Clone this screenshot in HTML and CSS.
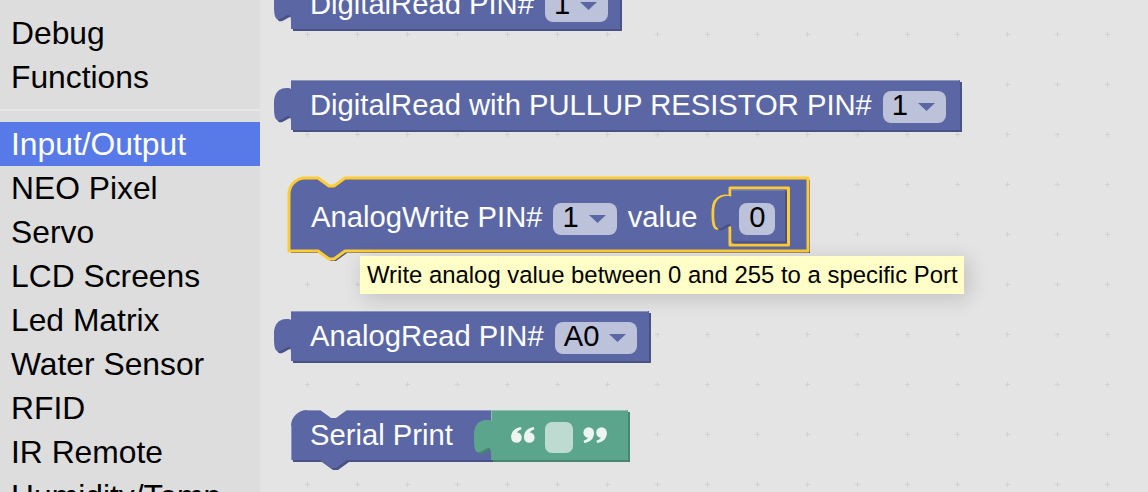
FILE: index.html
```html
<!DOCTYPE html>
<html>
<head>
<meta charset="utf-8">
<link rel="stylesheet" href="styles.css">
</head>
<body>
<div class="app">
  <nav class="toolbox">
    <ul class="cats">
      <li class="cat">Variables</li>
      <li class="cat">Debug</li>
      <li class="cat">Functions</li>
      <li class="sep"></li>
      <li class="cat sel">Input/Output</li>
      <li class="cat">NEO Pixel</li>
      <li class="cat">Servo</li>
      <li class="cat">LCD Screens</li>
      <li class="cat">Led Matrix</li>
      <li class="cat">Water Sensor</li>
      <li class="cat">RFID</li>
      <li class="cat">IR Remote</li>
      <li class="cat">Humidity/Temp</li>
    </ul>
  </nav>
  <main class="ws">
    <svg class="grid" width="888" height="492">
      <defs>
        <pattern id="gp" width="50" height="50" patternUnits="userSpaceOnUse" x="22" y="9">
          <path d="M23 25.5h5M25.5 23v5" stroke="#d2d2d2" stroke-width="1" fill="none"/>
        </pattern>
      </defs>
      <rect width="100%" height="100%" fill="url(#gp)"/>
    </svg>

    <div class="blk out b1">
      <svg class="shape" width="329" height="50">
        <path class="dk" transform="translate(2 2)" d="M0,0H329V50H0V42c0,-18.7 -17,15 -17,-14v-5c0,-18.7 17,-15 17,-14Z"/>
        <path class="fl" d="M0,0H329V50H0V42c0,-18.7 -17,15 -17,-14v-5c0,-18.7 17,-15 17,-14Z"/>
        <path class="lt" d="M0,0.5H328"/>
      </svg>
      <span class="lbl">DigitalRead PIN#</span>
      <span class="dd"><span>1</span><svg class="arr" viewBox="0 0 17 8"><path d="M0,0H17L8.5,8Z"/></svg></span>
    </div>

    <div class="blk out b2">
      <svg class="shape" width="669" height="50">
        <path class="dk" transform="translate(2 2)" d="M0,0H669V50H0V42c0,-18.7 -17,15 -17,-14v-5c0,-18.7 17,-15 17,-14Z"/>
        <path class="fl" d="M0,0H669V50H0V42c0,-18.7 -17,15 -17,-14v-5c0,-18.7 17,-15 17,-14Z"/>
        <path class="lt" d="M0,0.5H668"/>
      </svg>
      <span class="lbl">DigitalRead with PULLUP RESISTOR PIN#</span>
      <span class="dd"><span>1</span><svg class="arr" viewBox="0 0 17 8"><path d="M0,0H17L8.5,8Z"/></svg></span>
    </div>

    <div class="blk b3">
      <svg class="shape" width="519" height="73">
        <path class="dk" transform="translate(2 2)" d="M0,16A16,16 0 0 1 16,0H29l11,8 5,0 11,-8H519V73H56l-11,8 -5,0 -11,-8H0Z"/>
        <path class="fl" d="M0,16A16,16 0 0 1 16,0H29l11,8 5,0 11,-8H519V73H56l-11,8 -5,0 -11,-8H0Z"/>
        <path class="ys" d="M0,16A16,16 0 0 1 16,0H29l11,8 5,0 11,-8H519V73H56l-11,8 -5,0 -11,-8H0Z"/>
      </svg>
      <span class="lbl">AnalogWrite PIN#</span>
      <span class="dd"><span>1</span><svg class="arr" viewBox="0 0 17 8"><path d="M0,0H17L8.5,8Z"/></svg></span>
      <span class="lbl val">value</span>
      <span class="slot">
        <svg class="shape" width="80" height="57">
          <path class="fl ys" d="M20,0H78.5V57H20V42c0,-18.7 -17,15 -17,-14v-5c0,-18.7 17,-15 17,-14Z"/>
          <g transform="translate(21.5 1.5)">
            <path class="dk" transform="translate(2 2)" d="M0,0H53.5V52H0V40.5c0,-18.7 -17,15 -17,-14v-5c0,-18.7 17,-15 17,-14Z"/>
            <path class="fl" d="M0,0H53.5V52H0V40.5c0,-18.7 -17,15 -17,-14v-5c0,-18.7 17,-15 17,-14Z"/>
            <path class="lt" d="M0,0.5H53"/>
          </g>
        </svg>
        <span class="num">0</span>
      </span>
    </div>

    <div class="blk out b4">
      <svg class="shape" width="358" height="50">
        <path class="dk" transform="translate(2 2)" d="M0,0H358V50H0V42c0,-18.7 -17,15 -17,-14v-5c0,-18.7 17,-15 17,-14Z"/>
        <path class="fl" d="M0,0H358V50H0V42c0,-18.7 -17,15 -17,-14v-5c0,-18.7 17,-15 17,-14Z"/>
        <path class="lt" d="M0,0.5H357"/>
      </svg>
      <span class="lbl">AnalogRead PIN#</span>
      <span class="dd"><span>A0</span><svg class="arr" viewBox="0 0 17 8"><path d="M0,0H17L8.5,8Z"/></svg></span>
    </div>

    <div class="blk b5">
      <div class="stmt">
        <svg class="shape" width="200" height="50">
          <path class="dk" transform="translate(2 2)" d="M0,16A16,16 0 0 1 16,0H29l11,8 5,0 11,-8H200V50H56l-11,8 -5,0 -11,-8H0Z"/>
          <path class="fl" d="M0,16A16,16 0 0 1 16,0H29l11,8 5,0 11,-8H200V50H56l-11,8 -5,0 -11,-8H0Z"/>
          <path class="lt" d="M16,0.5H29M56,0.5H200M0.5,16V50"/>
        </svg>
        <span class="lbl">Serial Print</span>
      </div>
      <div class="gblk">
        <svg class="shape" width="137" height="50">
          <path class="gdk" transform="translate(2 2)" d="M0,0H137V50H0V44c0,-18.7 -17,15 -17,-14v-5c0,-18.7 17,-15 17,-14Z"/>
          <path class="gfl" d="M0,0H137V50H0V44c0,-18.7 -17,15 -17,-14v-5c0,-18.7 17,-15 17,-14Z"/>
          <path class="glt" d="M0,0.5H136M0.5,0V11"/>
        </svg>
        <svg class="q" viewBox="0 0 24 16">
          <circle cx="5.5" cy="10.5" r="5.3"/>
          <path d="M0.2,10.5C0.2,4.5 3.5,1 10,0L10.6,2.3C7,3.4 5.5,5.5 5.5,7Z"/>
          <circle cx="18.3" cy="10.5" r="5.3"/>
          <path d="M13,10.5C13,4.5 16.3,1 22.8,0L23.4,2.3C19.8,3.4 18.3,5.5 18.3,7Z"/>
        </svg>
        <span class="sfield"></span>
        <svg class="q" viewBox="0 0 24 16">
          <g transform="rotate(180 12 8)">
            <circle cx="5.5" cy="10.5" r="5.3"/>
            <path d="M0.2,10.5C0.2,4.5 3.5,1 10,0L10.6,2.3C7,3.4 5.5,5.5 5.5,7Z"/>
            <circle cx="18.3" cy="10.5" r="5.3"/>
            <path d="M13,10.5C13,4.5 16.3,1 22.8,0L23.4,2.3C19.8,3.4 18.3,5.5 18.3,7Z"/>
          </g>
        </svg>
      </div>
    </div>

    <div class="tip">Write analog value between 0 and 255 to a specific Port</div>
  </main>
</div>
</body>
</html>
```

FILE: styles.css
```css
html, body {
  margin: 0;
  height: 100%;
  overflow: hidden;
}

body {
  font-family: "Liberation Sans", Arial, sans-serif;
}

.app {
  display: flex;
  height: 492px;
}

/* ---------- toolbox ---------- */
.toolbox {
  width: 260px;
  flex: none;
  background: #dddddd;
  overflow: hidden;
}

.cats {
  list-style: none;
  margin: -33px 0 0;
  padding: 0;
}

.cat {
  height: 44px;
  box-sizing: border-box;
  padding: 0 0 0 11px;
  line-height: 44px;
  font-size: 31.8px;
  color: #000;
  white-space: nowrap;
}

.sep {
  height: 23px;
  box-sizing: border-box;
  padding-top: 10px;
}

.sep::before {
  content: "";
  display: block;
  height: 2px;
  background: #e8e8e8;
}

.sel {
  background: #577ae8;
  color: #fff;
}

/* ---------- workspace ---------- */
.ws {
  position: relative;
  flex: 1;
  background: #e4e4e4;
  overflow: hidden;
}

.grid {
  position: absolute;
  left: 0;
  top: 0;
}

.blk {
  position: absolute;
  display: flex;
  align-items: baseline;
  box-sizing: border-box;
  font-size: 29.2px;
  color: #fff;
  white-space: nowrap;
}

.shape {
  position: absolute;
  left: 0;
  top: 0;
  overflow: visible;
}

.blk > *:not(.shape),
.stmt > *:not(.shape),
.gblk > *:not(.shape),
.slot > *:not(.shape) {
  position: relative;
}

.dk { fill: #495284; }
.fl { fill: #5b67a5; }
.lt { fill: none; stroke: #8c95c0; stroke-width: 1; }
.ys { fill: none; stroke: #ffcc33; stroke-width: 3; stroke-linejoin: round; }
.fl.ys { fill: #5b67a5; }

.gdk { fill: #498470; }
.gfl { fill: #5ba58c; }
.glt { fill: none; stroke: #8cc0af; stroke-width: 1; }

.out {
  height: 50px;
  padding: 9px 0 0 19px;
}

.lbl {
  line-height: normal;
}

.b1 { left: 31px; top: -21px; width: 329px; }
.b2 { left: 31px; top: 80px; width: 669px; }
.b4 { left: 31px; top: 311px; width: 358px; }

.b3 {
  left: 29px;
  top: 178px;
  width: 519px;
  height: 73px;
  padding-left: 22px;
}

.b5 {
  left: 31px;
  top: 410px;
  align-items: flex-start;
}

/* dropdown field */
.dd {
  display: flex;
  height: 32px;
  box-sizing: border-box;
  padding: 0 11px 0 9px;
  margin-left: 11px;
  border-radius: 8px;
  background: #bdc2db;
  color: #000;
  line-height: 28px;
}

.arr {
  width: 17px;
  height: 8px;
  margin: 12px 0 0 10px;
  flex: none;
  fill: #5b67a5;
}

.val {
  margin-left: 11px;
}

/* inline value input */
.slot {
  position: relative;
  display: block;
  width: 80px;
  height: 57px;
  margin: 10px 0 0 13px;
  padding: 15px 0 0 29px;
  box-sizing: border-box;
  flex: none;
}

.num {
  display: block;
  width: 36px;
  height: 32px;
  line-height: 28px;
  text-align: center;
  background: #bdc2db;
  border-radius: 8px;
  color: #000;
}

/* serial print */
.stmt {
  position: relative;
  width: 200px;
  height: 50px;
  box-sizing: border-box;
  padding: 9px 0 0 19px;
}

.gblk {
  position: relative;
  display: flex;
  align-items: flex-start;
  width: 137px;
  height: 50px;
  box-sizing: border-box;
  padding-left: 20px;
}

.q {
  width: 24px;
  height: 16px;
  margin-top: 17px;
  flex: none;
  fill: #eef5f1;
}

.sfield {
  width: 28px;
  height: 31px;
  margin: 12px 10px 0;
  background: #bddbd1;
  border-radius: 7px;
  flex: none;
}

/* tooltip */
.tip {
  position: absolute;
  left: 100px;
  top: 256px;
  height: 38px;
  padding: 0 6px 0 7px;
  line-height: 38px;
  font-size: 23.9px;
  background: #ffffc7;
  color: #000;
  box-shadow: 4px 4px 20px 1px rgba(0, 0, 0, 0.15);
  white-space: nowrap;
}
```
